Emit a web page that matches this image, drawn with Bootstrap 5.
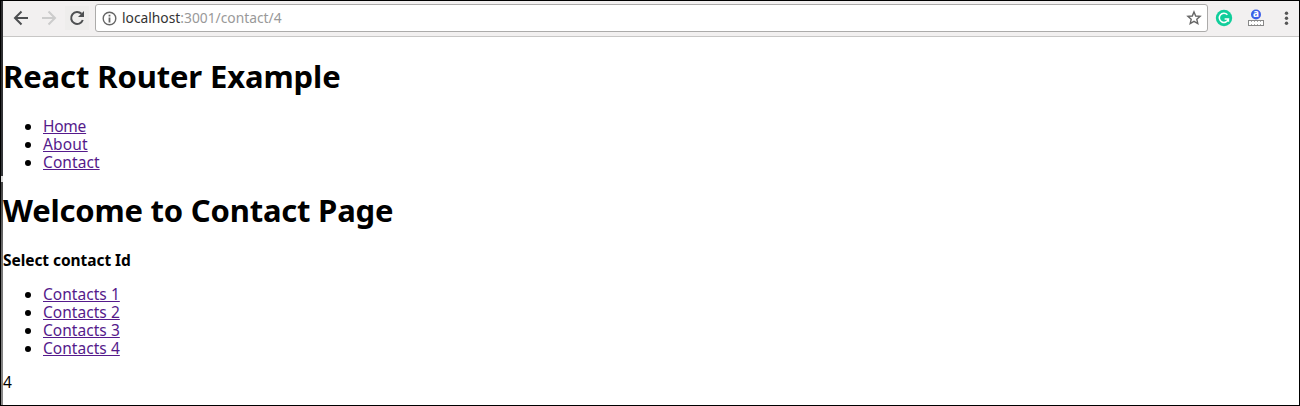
<!DOCTYPE html>
<html lang="en">
<head>
<meta charset="utf-8">
<meta name="viewport" content="width=device-width, initial-scale=1">
<title>React Router Example</title>
<link href="https://cdn.jsdelivr.net/npm/bootstrap@5.3.0/dist/css/bootstrap.min.css" rel="stylesheet">
<style>
body{font:15.5px/18px "Noto Sans",sans-serif;color:#000}
.browser{height:406px;border:1px solid #000;overflow:hidden}
.edge{width:2px;background:linear-gradient(#2c2c2e 0,#333538 175px,#ddd 175px,#ddd 181px,#444 181px,#777 270px,#888)}
.toolbar{height:36px;padding:0 3px 1px 8px;background:#f2f0f0;border-bottom:1px solid #c8c7c6}
.toolbar svg{display:block;flex:none}
.address{height:28px;margin:0 6px 0 6px;padding:0 5px 0 6px;background:#fff;border:1px solid #acabaa;border-radius:3px;font-size:13.8px;color:#999}
.url{margin-left:5px}
.url .text-black{color:#333!important}
.forward{margin-left:8px}
.reload{width:24px;height:24px;margin-left:6px;background:#eeedec}
.extensions{gap:13px}
h1{font-size:31px;line-height:36px;font-weight:700;margin:21px 0 23px}
.title-app{letter-spacing:-.125px}
.title-page{letter-spacing:-.21px}
.prompt{letter-spacing:-.06px}
ul{padding-left:40px;margin:0}
a,a:hover{display:inline-block;height:18px;vertical-align:top;color:#551a8b;text-underline-offset:1px;text-decoration-thickness:1px}
.ls-home{letter-spacing:-.25px}
.ls-about{letter-spacing:.14px}
.ls-contact{letter-spacing:.08px}
.contacts a{letter-spacing:.04px}
.contacts{margin:16px 0}
</style>
</head>
<body>
<div class="browser d-flex">
  <div class="edge flex-shrink-0"></div>
  <div class="flex-grow-1">
    <header class="toolbar d-flex align-items-center">
      <svg width="20" height="20" viewBox="0 0 20 20" fill="none" stroke="#4d4f51" stroke-width="2"><path d="M17 10H4M10.500 3.500 4 10l6.500 6.500"/></svg>
      <svg class="forward" width="20" height="20" viewBox="0 0 20 20" fill="none" stroke="#ccc" stroke-width="2"><path d="M3 10h13M9.500 3.500 16 10l-6.500 6.500"/></svg>
      <span class="reload d-flex align-items-center justify-content-center"><svg width="20" height="20" viewBox="0 0 20 20"><path d="M14.500 5.800A6 6 0 1 0 15.800 12" fill="none" stroke="#4d4f51" stroke-width="2"/><path d="M17 3v6h-6z" fill="#4d4f51"/></svg></span>
      <div class="address d-flex align-items-center flex-grow-1">
        <svg width="15" height="15" viewBox="0 0 15 15"><circle cx="7.500" cy="7.500" r="6.300" fill="none" stroke="#666" stroke-width="1.400"/><path d="M6.600 3.800h1.800v1.600H6.600zM6.600 6.500h1.800v5H6.600z" fill="#666"/></svg>
        <span class="url"><span class="text-black">localhost</span>:3001/contact/4</span>
        <svg class="ms-auto" width="16" height="16" viewBox="0 0 16 16" fill="none" stroke="#666" stroke-width="1.400"><path d="m8 1.900 1.700 4.100 4.400.4-3.300 2.900 1 4.300L8 11.300l-3.800 2.300 1-4.300-3.300-2.900 4.400-.4z"/></svg>
      </div>
      <div class="extensions d-flex align-items-center">
        <svg width="20" height="20" viewBox="0 0 20 20"><circle cx="10" cy="10" r="8.200" fill="#11ce9b"/><path d="M13.400 6.800A4.600 4.600 0 1 0 14.400 11H10.600M14.400 10.200v3.600" fill="none" stroke="#fff" stroke-width="1.500"/></svg>
        <svg width="18" height="20" viewBox="0 0 18 20"><circle cx="9" cy="6.500" r="5" fill="#3b5fe8"/><text x="9" y="9.300" text-anchor="middle" font-family="Noto Sans,sans-serif" font-size="10" font-weight="700" fill="#fff">a</text><path d="M2 13h14v4H2z" fill="#fff"/><path d="M1.500 12v6M16.500 12v6M1 12.500h16M1 17.500h16" stroke="#888" fill="none"/><path d="M4.500 13v1M7.500 13v1M10.500 13v1M13.500 13v1M4.500 16v1M7.500 16v1M10.500 16v1M13.500 16v1" stroke="#aaa"/></svg>
        <svg width="18" height="20" viewBox="0 0 18 20" fill="#555"><circle cx="8.500" cy="5.300" r="1.700"/><circle cx="8.500" cy="10.300" r="1.700"/><circle cx="8.500" cy="15.300" r="1.700"/></svg>
      </div>
    </header>
    <main>
      <h1 class="title-app">React Router Example</h1>
      <ul><li><a class="ls-home" href="#">Home</a></li><li><a class="ls-about" href="#">About</a></li><li><a class="ls-contact" href="#">Contact</a></li></ul>
      <h1 class="title-page">Welcome to Contact Page</h1>
      <div class="prompt fw-bold">Select contact Id</div>
      <ul class="contacts"><li><a href="#">Contacts 1</a></li><li><a href="#">Contacts 2</a></li><li><a href="#">Contacts 3</a></li><li><a href="#">Contacts 4</a></li></ul>
      <div>4</div>
    </main>
  </div>
</div>
</body>
</html>
